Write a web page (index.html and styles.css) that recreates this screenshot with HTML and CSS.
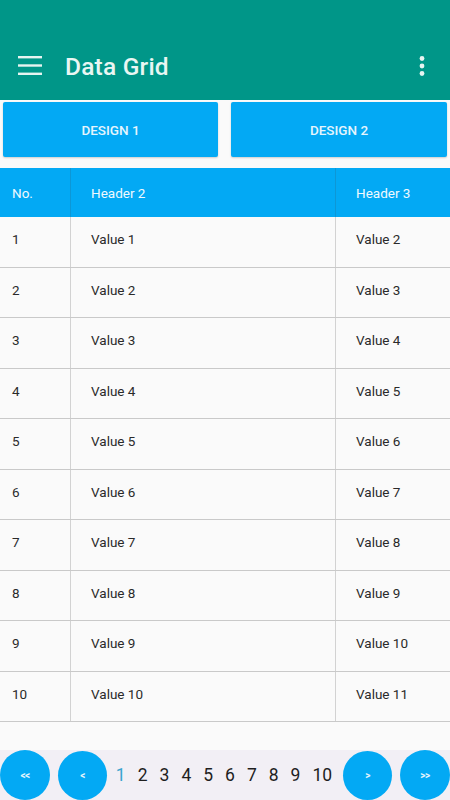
FILE: index.html
```html
<!DOCTYPE html>
<html>
<head>
<meta charset="utf-8">
<link rel="stylesheet" href="styles.css">
</head>
<body>
<div class="page">
  <header class="appbar">
    <div class="toolbar">
      <svg class="menu" width="24" height="20" viewBox="0 0 24 20">
        <rect x="0" y="0" width="24" height="2.4" fill="#e6f4f1"/>
        <rect x="0" y="8.3" width="24" height="2.4" fill="#e6f4f1"/>
        <rect x="0" y="16.6" width="24" height="2.4" fill="#e6f4f1"/>
      </svg>
      <h1 class="title">Data Grid</h1>
      <svg class="more" width="6" height="20" viewBox="0 0 6 20">
        <circle cx="3" cy="2.5" r="2.4" fill="#e6f4f1"/>
        <circle cx="3" cy="10" r="2.4" fill="#e6f4f1"/>
        <circle cx="3" cy="17.5" r="2.4" fill="#e6f4f1"/>
      </svg>
    </div>
  </header>

  <div class="actions">
    <button class="btn">DESIGN 1</button>
    <button class="btn">DESIGN 2</button>
  </div>

  <div class="grid">
    <div class="row head">
      <div class="cell c1">No.</div>
      <div class="cell c2">Header 2</div>
      <div class="cell c3">Header 3</div>
    </div>
    <div class="row"><div class="cell c1">1</div><div class="cell c2">Value 1</div><div class="cell c3">Value 2</div></div>
    <div class="row"><div class="cell c1">2</div><div class="cell c2">Value 2</div><div class="cell c3">Value 3</div></div>
    <div class="row"><div class="cell c1">3</div><div class="cell c2">Value 3</div><div class="cell c3">Value 4</div></div>
    <div class="row"><div class="cell c1">4</div><div class="cell c2">Value 4</div><div class="cell c3">Value 5</div></div>
    <div class="row"><div class="cell c1">5</div><div class="cell c2">Value 5</div><div class="cell c3">Value 6</div></div>
    <div class="row"><div class="cell c1">6</div><div class="cell c2">Value 6</div><div class="cell c3">Value 7</div></div>
    <div class="row"><div class="cell c1">7</div><div class="cell c2">Value 7</div><div class="cell c3">Value 8</div></div>
    <div class="row"><div class="cell c1">8</div><div class="cell c2">Value 8</div><div class="cell c3">Value 9</div></div>
    <div class="row"><div class="cell c1">9</div><div class="cell c2">Value 9</div><div class="cell c3">Value 10</div></div>
    <div class="row"><div class="cell c1">10</div><div class="cell c2">Value 10</div><div class="cell c3">Value 11</div></div>
  </div>

  <div class="spacer"></div>

  <nav class="pager">
    <button class="circle">&lt;&lt;</button>
    <button class="circle c-prev">&lt;</button>
    <div class="pages">
      <span class="pg active">1</span>
      <span class="pg">2</span>
      <span class="pg">3</span>
      <span class="pg">4</span>
      <span class="pg">5</span>
      <span class="pg">6</span>
      <span class="pg">7</span>
      <span class="pg">8</span>
      <span class="pg">9</span>
      <span class="pg">10</span>
    </div>
    <button class="circle c-next">&gt;</button>
    <button class="circle c-last">&gt;&gt;</button>
  </nav>
</div>
</body>
</html>
```

FILE: styles.css
```css
* { box-sizing: border-box; }
html, body {
  margin: 0;
  padding: 0;
  background: #fafafa;
  font-family: Roboto, "Noto Sans", "Liberation Sans", sans-serif;
}
.page {
  width: 450px;
  height: 800px;
  display: flex;
  flex-direction: column;
  overflow: hidden;
}
.appbar {
  background: #009688;
  height: 100px;
  flex: none;
  padding-top: 38px;
}
.toolbar {
  height: 56px;
  display: flex;
  align-items: center;
  padding: 0 25px 0 18px;
}
.menu { flex: none; display: block; }
.title {
  margin: 0 0 0 23px;
  flex: 1;
  font-size: 24.5px;
  font-weight: 500;
  color: #e9f6f3;
  letter-spacing: 0.2px;
}
.more { flex: none; display: block; }

.actions {
  flex: none;
  display: grid;
  grid-template-columns: 215px 216px;
  column-gap: 13px;
  padding: 2px 3px 11px 3px;
}
.btn {
  height: 55px;
  border: none;
  border-radius: 2px;
  background: #03a9f4;
  color: #e6f5fd;
  font-family: Roboto, "Noto Sans", sans-serif;
  font-size: 13.5px;
  font-weight: 500;
  letter-spacing: 0;
  box-shadow: 0 1px 2px rgba(0,0,0,0.18);
  padding: 0;
}

.grid {
  flex: none;
  display: flex;
  flex-direction: column;
}
.row {
  display: grid;
  grid-template-columns: 71px 265px 1fr;
  height: 50.5px;
  border-bottom: 1px solid #c9c9c9;
}
.row.head {
  height: 49px;
  background: #03a9f4;
  border-bottom: none;
}
.cell {
  font-size: 13.5px;
  color: #2a2a2a;
  padding-top: 13px;
  line-height: 18px;
}
.c1 { padding-left: 12px; border-right: 1px solid #d2d2d2; }
.c2 { padding-left: 20px; border-right: 1px solid #d2d2d2; }
.c3 { padding-left: 20px; }
.head .cell {
  color: #f0f9fe;
  font-size: 13.5px;
  padding-top: 0;
  line-height: 50px;
  border-color: #0d97d6;
}

.spacer { flex: 1; }

.pager {
  flex: none;
  height: 50px;
  background: #f2eff5;
  display: flex;
  align-items: center;
}
.circle {
  flex: none;
  width: 50px;
  height: 50px;
  border-radius: 50%;
  border: none;
  background: #03a9f4;
  color: #e3f4fd;
  font-family: Roboto, "Noto Sans", sans-serif;
  font-size: 10px;
  font-weight: 700;
  padding: 0;
  letter-spacing: -0.5px;
}
.c-prev { margin-left: 8px; width: 49px; height: 49px; }
.c-next { width: 49px; height: 49px; }
.c-last { margin-left: 8px; }
.pages {
  flex: 1;
  display: flex;
  justify-content: center;
  gap: 12px;
  font-size: 17.5px;
  color: #1e1e1e;
  padding-right: 2px;
}
.pg.active { color: #3ba3cf; }
```
